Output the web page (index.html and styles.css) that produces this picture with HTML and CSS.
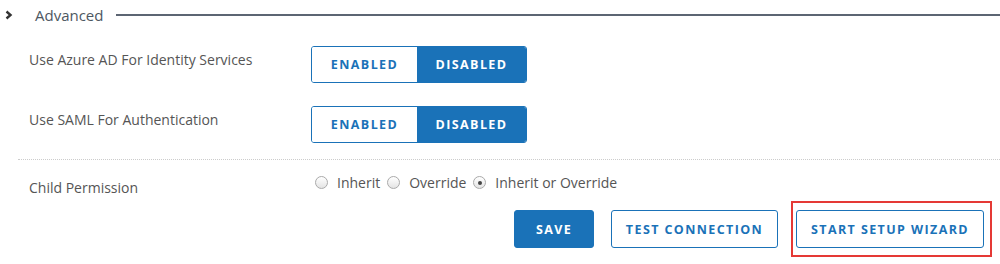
FILE: index.html
```html
<!DOCTYPE html>
<html lang="en">

<head>
    <meta charset="UTF-8">
    <title>Advanced settings</title>
    <link rel="stylesheet" href="styles.css">
</head>

<body>
    <div class="section-head">
        <svg class="chevron" width="8" height="10" viewBox="0 0 8 10">
            <path d="M1.5 1.5 L5.5 5 L1.5 8.5" fill="none" stroke="#333" stroke-width="2.4"/>
        </svg>
        <span class="section-title">Advanced</span>
        <span class="section-line"></span>
    </div>

    <div class="settings">
        <div class="row">
            <div class="label">Use Azure AD For Identity Services</div>
            <div class="toggle">
                <button class="opt">ENABLED</button>
                <button class="opt active">DISABLED</button>
            </div>
        </div>
        <div class="row">
            <div class="label">Use SAML For Authentication</div>
            <div class="toggle">
                <button class="opt">ENABLED</button>
                <button class="opt active">DISABLED</button>
            </div>
        </div>
    </div>

    <div class="perm-row">
        <div class="label perm-label">Child Permission</div>
        <div class="radios">
            <label class="radio"><span class="dot"></span>Inherit</label>
            <label class="radio"><span class="dot"></span>Override</label>
            <label class="radio"><span class="dot checked"></span>Inherit or Override</label>
        </div>
    </div>

    <div class="actions">
        <button class="btn primary">SAVE</button>
        <button class="btn outline">TEST CONNECTION</button>
        <div class="highlight">
            <button class="btn outline wizard">START SETUP WIZARD</button>
        </div>
    </div>
</body>

</html>
```

FILE: styles.css
```css
*{
    margin: 0;
    padding: 0;
    box-sizing: border-box;
}
body{
    background-color: #fff;
    font-family: "Open Sans", "Liberation Sans", sans-serif;
    color: #555;
    width: 1000px;
    height: 264px;
    overflow: hidden;
}
.section-head{
    display: flex;
    align-items: center;
    height: 29px;
    padding-left: 5px;
}
.chevron{
    margin-right: 22px;
}
.section-title{
    font-size: 15px;
    color: #4d5762;
    margin-right: 13px;
}
.section-line{
    flex: 1;
    height: 2px;
    background-color: #5c6573;
}
.settings{
    padding-top: 17px;
}
.row{
    display: flex;
    align-items: flex-start;
    height: 60px;
}
.label{
    width: 311px;
    padding-left: 29px;
    font-size: 14px;
    color: #555;
    line-height: 18px;
    padding-top: 5px;
}
.toggle{
    display: flex;
    height: 37px;
    border: 1px solid #1a72b8;
    border-radius: 3px;
    overflow: hidden;
}
.opt{
    border: none;
    background: #fff;
    color: #1a72b8;
    font-family: inherit;
    font-weight: 700;
    font-size: 12.5px;
    letter-spacing: 1.4px;
    width: 105px;
}
.opt.active{
    width: 109px;
    background-color: #1a72b8;
    color: #fff;
}
.perm-row{
    display: flex;
    align-items: flex-start;
    border-top: 1px dotted #ccc;
    margin-left: 18px;
    margin-top: -7px;
    padding-top: 13px;
    height: 50px;
}
.perm-label{
    padding-left: 11px;
    width: 297px;
    padding-top: 6px;
}
.radios{
    display: flex;
    gap: 7px;
    font-size: 14px;
    line-height: 19px;
    color: #555;
}
.radio{
    display: flex;
    align-items: center;
    gap: 9px;
}
.dot{
    width: 13px;
    height: 13px;
    border-radius: 50%;
    border: 1px solid #aaa;
    background: linear-gradient(#fff, #e4e4e4);
    display: inline-block;
    position: relative;
}
.dot.checked::after{
    content: "";
    position: absolute;
    left: 3.5px;
    top: 3.5px;
    width: 4px;
    height: 4px;
    border-radius: 50%;
    background-color: #444;
}
.actions{
    display: flex;
    justify-content: flex-end;
    align-items: center;
    padding-right: 8px;
    margin-top: -8px;
}
.btn{
    height: 38px;
    border-radius: 3px;
    font-family: inherit;
    font-weight: 700;
    font-size: 12.5px;
    letter-spacing: 1.4px;
    white-space: nowrap;
    color: #1a72b8;
    background: #fff;
    border: 1px solid #1a72b8;
}
.btn.primary{
    width: 80px;
    margin-right: 17px;
    background-color: #1a72b8;
    color: #fff;
}
.btn.outline{
    width: 167px;
    margin-right: 13px;
}
.btn.wizard{
    width: 188px;
    margin-right: 0;
}
.highlight{
    border: 2px solid #e53935;
    padding: 7px 6px 7px 3px;
}
```
